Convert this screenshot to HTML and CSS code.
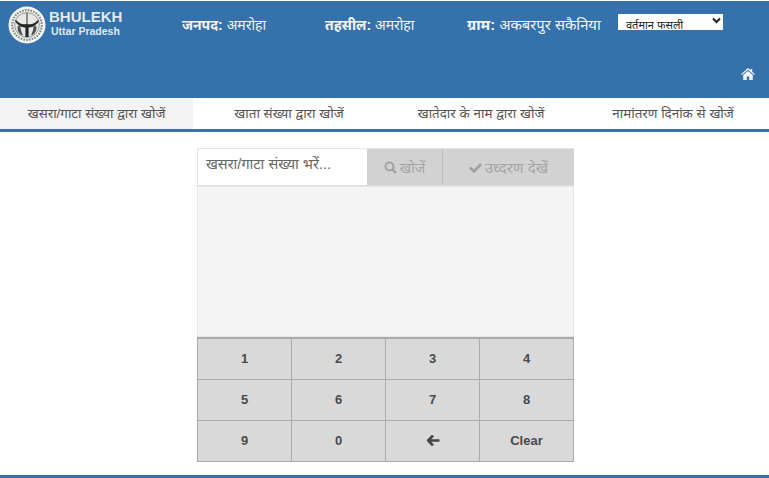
FILE: index.html
```html
<!DOCTYPE html>
<html lang="hi">
<head>
  <meta charset="UTF-8">
  <title>Bhulekh Uttar Pradesh</title>
  <link rel="stylesheet" href="styles.css">
</head>
<body>
  <!-- Header -->
  <header class="top">
    <div class="top-row">
      <div class="brand">
        <svg class="logo" width="38" height="38" viewBox="0 0 38 38">
          <circle cx="19" cy="19" r="18.5" fill="#f4f4f0"/>
          <circle cx="19" cy="19" r="14.8" fill="none" stroke="#858a89" stroke-width="2.2" stroke-dasharray="1.6 1.2"/>
          <circle cx="19" cy="19" r="12.4" fill="#e8e8e2" stroke="#5c6262" stroke-width="0.6"/>
          <path d="M7.5 13.5 C12 18.5 15 18.5 19 18 C23 18.5 26 18.5 30.5 13.5 L30.5 16 C26 21 23 21.5 20.6 21.5 L20.6 31 L17.4 31 L17.4 21.5 C15 21.5 12 21 7.5 16 Z" fill="#20262a"/>
          <path d="M19 7 V18" stroke="#4c5252" stroke-width="1.2"/>
          <path d="M10 19.5 C8.5 24 11 28.5 15 29.5 C13.5 26 12.5 23 12.5 20.5 Z M28 19.5 C29.5 24 27 28.5 23 29.5 C24.5 26 25.5 23 25.5 20.5 Z" fill="#4a5254"/>
        </svg>
        <div class="brand-text">
          <div class="brand-name">BHULEKH</div>
          <div class="brand-sub">Uttar Pradesh</div>
        </div>
      </div>
      <div class="place place-a"><b>जनपद:</b> अमरोहा</div>
      <div class="place place-b"><b>तहसील:</b> अमरोहा</div>
      <div class="place place-c"><b>ग्राम:</b> अकबरपुर सकैनिया</div>
      <div class="fasli">
        <span>वर्तमान फसली</span>
        <svg width="9" height="7" viewBox="0 0 9 7"><path d="M1 1.5 L4.5 5 L8 1.5" fill="none" stroke="#222" stroke-width="2"/></svg>
      </div>
    </div>
    <div class="home-row">
      <svg width="14" height="12" viewBox="0 0 14 12"><path d="M7 0 L9.5 2.2 V1 H11.2 V3.7 L14 6.2 L13.2 7 L7 1.7 L0.8 7 L0 6.2 Z M2.2 7 L7 3 L11.8 7 V12 H8.2 V8.4 H5.8 V12 H2.2 Z" fill="#f1f5f9"/></svg>
    </div>
  </header>

  <!-- Search tabs -->
  <nav class="tabs">
    <div class="tab active">खसरा/गाटा संख्या द्वारा खोजें</div>
    <div class="tab">खाता संख्या द्वारा खोजें</div>
    <div class="tab">खातेदार के नाम द्वारा खोजें</div>
    <div class="tab">नामांतरण दिनांक से खोजें</div>
  </nav>

  <!-- Search panel -->
  <main class="panel">
    <div class="search-row">
      <div class="search-input">खसरा/गाटा संख्या भरें...</div>
      <div class="search-btn btn-find">
        <svg width="13" height="13" viewBox="0 0 13 13"><circle cx="5.5" cy="5.5" r="4" fill="none" stroke="#a0a0a0" stroke-width="2"/><path d="M8.5 8.5 L12 12" stroke="#a0a0a0" stroke-width="2.4"/></svg>
        खोजें
      </div>
      <div class="search-btn btn-view">
        <svg width="13" height="11" viewBox="0 0 13 11"><path d="M1 5.5 L5 9.5 L12 2" fill="none" stroke="#a0a0a0" stroke-width="2.6"/></svg>
        उध्दरण देखें
      </div>
    </div>
    <div class="result"></div>
    <div class="keypad">
      <div class="key">1</div>
      <div class="key">2</div>
      <div class="key">3</div>
      <div class="key">4</div>
      <div class="key">5</div>
      <div class="key">6</div>
      <div class="key">7</div>
      <div class="key">8</div>
      <div class="key">9</div>
      <div class="key">0</div>
      <div class="key">
        <svg class="back" width="13" height="11" viewBox="0 0 13 11"><path d="M6 0.5 L1 5.5 L6 10.5 M1.5 5.5 H12.5" fill="none" stroke="#444" stroke-width="2.6"/></svg>
      </div>
      <div class="key">Clear</div>
    </div>
  </main>

  <footer class="bottom"></footer>
</body>
</html>
```

FILE: styles.css
```css
* { margin: 0; padding: 0; box-sizing: border-box; }

body {
  background-color: #fff;
  font-family: "Liberation Sans", "Noto Sans", sans-serif;
  height: 478px;
  overflow: hidden;
  display: flex;
  flex-direction: column;
  color: #4a4a4a;
}

/* Header */
.top {
  background-color: #3571aa;
  height: 97px;
  margin-top: 1px;
  flex-shrink: 0;
  color: #f1f5f9;
}
.top-row {
  display: flex;
  align-items: flex-start;
  height: 60px;
  padding: 5px 0 0 8px;
}
.brand {
  display: flex;
  gap: 3px;
  width: 174px;
  flex-shrink: 0;
}
.logo { flex-shrink: 0; }
.brand-name {
  font-size: 15px;
  font-weight: bold;
  line-height: 17px;
  margin-top: 2px;
  color: #dfe9f2;
}
.brand-sub {
  font-size: 10.5px;
  font-weight: bold;
  line-height: 12px;
  margin-left: 2px;
  color: #dfe9f2;
}
.place {
  font-size: 14px;
  line-height: 20px;
  margin-top: 9px;
  white-space: nowrap;
}
.place-a { width: 143px; }
.place-b { width: 142px; }
.place-c { width: 151px; font-size: 14.8px; }
.fasli {
  width: 105px;
  height: 16px;
  margin-top: 8px;
  background: #fff;
  color: #222;
  font-size: 11px;
  line-height: 23px;
  padding-left: 8px;
  display: flex;
  justify-content: space-between;
  overflow: hidden;
}
.fasli svg { margin: 3px 2px 0 0; }
.home-row {
  display: flex;
  justify-content: flex-end;
  padding: 7px 14px 0 0;
}

/* Tabs */
.tabs {
  display: grid;
  grid-template-columns: 193px 1fr 1fr 1fr;
  height: 34px;
  flex-shrink: 0;
  border-bottom: 3px solid #3571aa;
}
.tab {
  font-size: 13.4px;
  line-height: 31px;
  text-align: center;
  color: #555;
  white-space: nowrap;
}
.tab.active { background-color: #f3f3f3; }

/* Search panel */
.panel {
  width: 377px;
  margin: 16px 0 0 197px;
  flex-shrink: 0;
}
.search-row {
  display: flex;
  height: 38px;
  border-bottom: 1px solid #ddd;
  border-top: 1px solid #e6e6e6;
}
.search-input {
  width: 170px;
  padding-left: 8px;
  font-size: 14.5px;
  line-height: 30px;
  color: #666;
  border-left: 1px solid #e6e6e6;
  white-space: nowrap;
}
.search-btn {
  background-color: #d2d2d2;
  color: #a5a5a5;
  font-size: 14px;
  display: flex;
  align-items: center;
  justify-content: center;
  gap: 3px;
}
.btn-find { width: 75px; }
.btn-view { flex: 1; border-left: 1px solid #bfbfbf; font-size: 15px; }
.result {
  height: 151px;
  background-color: #f4f4f4;
  border: 1px solid #e6e6e6;
}
.keypad {
  display: grid;
  grid-template-columns: repeat(4, 1fr);
  grid-auto-rows: 41px;
  border-top: 2px solid #aaa;
  border-left: 1px solid #aaa;
}
.key {
  background-color: #d9d9d9;
  border-right: 1px solid #aaa;
  border-bottom: 1px solid #aaa;
  font-size: 13px;
  font-weight: bold;
  padding-bottom: 2px;
  display: flex;
  align-items: center;
  justify-content: center;
}
.back { margin-left: 2px; }

/* Footer */
.bottom {
  margin-top: auto;
  height: 3px;
  background-color: #3571aa;
}
```
